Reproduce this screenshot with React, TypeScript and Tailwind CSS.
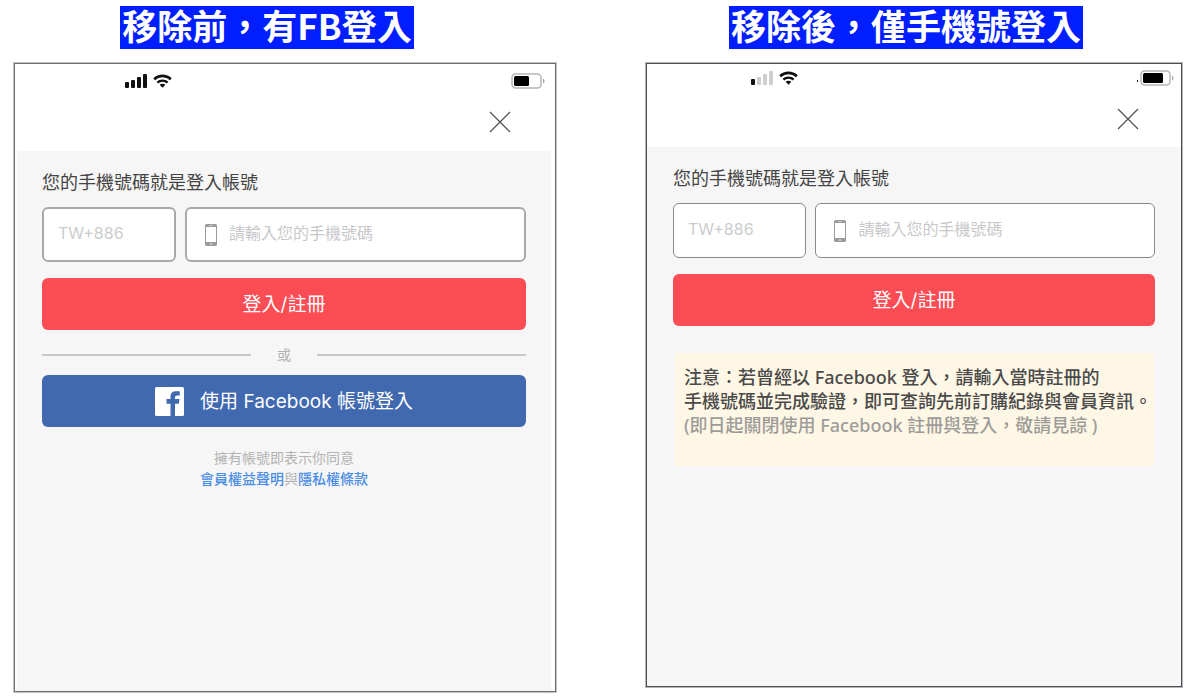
import React from "react";
import clsx from "clsx";

// full-width punctuation
const COMMA = "\uff0c";
const COLON = "\uff1a";

const Signal = ({ bars }: { bars: number }) => (
  <svg width="22" height="14" viewBox="0 0 22 14" aria-hidden="true">
    {[
      { x: 0, h: 6 },
      { x: 6, h: 8 },
      { x: 12, h: 11 },
      { x: 18, h: 14 },
    ].map((bar, i) => (
      <rect
        key={bar.x}
        x={bar.x}
        y={14 - bar.h}
        width="4"
        height={bar.h}
        rx="1"
        fill={i < bars ? "#111" : "#cfcfcf"}
      />
    ))}
  </svg>
);

const Wifi = () => (
  <svg width="19" height="14" viewBox="0 0 20 14" fill="none" aria-hidden="true">
    <path d="M1.2 5.2C6.2 .4 13.8.4 18.8 5.2" stroke="#111" strokeWidth="2.7" />
    <path d="M4.6 8.8c2.9-2.9 7.9-2.9 10.8 0" stroke="#111" strokeWidth="2.5" />
    <path d="M10 14l-3-3c1.6-1.5 4.4-1.5 6 0z" fill="#111" />
  </svg>
);

const Battery = ({ level }: { level: number }) => (
  <svg width="34" height="16" viewBox="0 0 34 16" fill="none" aria-hidden="true">
    <rect x="1" y="1" width="29" height="14" rx="3.5" stroke="#b5b5b5" strokeWidth="1.5" />
    <rect x="3" y="3" width={level} height="10" rx="1.5" fill="#000" />
    <path d="M32 5.5c2 .8 2 4.2 0 5z" fill="#a8a8a8" />
  </svg>
);

const PhoneIcon = () => (
  <svg width="12" height="22" viewBox="0 0 12 22" className="shrink-0" aria-hidden="true">
    <rect width="12" height="22" rx="1.5" fill="#9b9b9b" />
    <rect x="1" y="3" width="10" height="15" fill="#fff" />
    <rect x="4" y="1.2" width="4" height=".7" fill="#ddd" />
    <circle cx="6" cy="20" r=".9" fill="#ddd" />
  </svg>
);

const FacebookIcon = () => (
  <svg width="29" height="29" viewBox="0 0 29 29" className="shrink-0" aria-hidden="true">
    <rect width="29" height="29" rx="1.5" fill="#fff" />
    <path
      d="M15.5 29V16.8h-4V12h4V9.5C15.5 6 17.8 4.2 21 4.2h3.8v4.4h-2.6c-1.6 0-2.2.8-2.2 2.2V12h4.5l-.6 4.8H20V29z"
      fill="#4169b0"
    />
  </svg>
);

const CloseButton = () => (
  <button type="button" aria-label="關閉">
    <svg width="22" height="22" viewBox="0 0 22 22" className="block">
      <path d="M1 1l20 20M21 1L1 21" stroke="#555" strokeWidth="1.3" />
    </svg>
  </button>
);

const Title = ({ children }: { children: React.ReactNode }) => (
  <h2 className="h-[43px] bg-[#001eff] px-[2px] text-[35px] leading-[38px] font-bold whitespace-nowrap text-white [font-family:'Noto_Sans_CJK_TC',sans-serif]">
    {children}
  </h2>
);

const LoginForm = ({ id, fieldClass }: { id: string; fieldClass: string }) => (
  <>
    <label htmlFor={`${id}-phone`} className="block text-[18px] leading-[30px] text-[#444]">
      您的手機號碼就是登入帳號
    </label>
    <div className="mt-[9px] grid h-[55px] grid-cols-[134fr_341fr] gap-[9px]">
      <input
        type="text"
        aria-label="國碼"
        placeholder="TW+886"
        className={clsx(
          "min-w-0 rounded-md bg-white pb-1 pl-[14px] text-base placeholder:text-[#ccc]",
          fieldClass
        )}
      />
      <div className={clsx("flex min-w-0 items-center gap-3 rounded-md bg-white pl-[18px]", fieldClass)}>
        <PhoneIcon />
        <input
          id={`${id}-phone`}
          type="tel"
          placeholder="請輸入您的手機號碼"
          className="h-full w-full min-w-0 pb-1 text-base outline-none placeholder:text-[#c8c8cb]"
        />
      </div>
    </div>
    <button
      type="submit"
      className="mt-4 h-[52px] w-full rounded-md bg-[#fc4c54] pt-[2px] text-[19px] text-white"
    >
      登入/註冊
    </button>
  </>
);

const BeforePanel = () => (
  <section className="flex min-w-0 flex-[542] flex-col pb-[5px]">
    <div className="flex justify-center pr-9">
      <Title>移除前{COMMA}有FB登入</Title>
    </div>
    <div className="mt-[14px] flex flex-1 flex-col border border-[#6e6e6e] bg-white ring-1 ring-[#c4c4c4]">
      <div className="flex h-[34px] items-center gap-[6px] pr-[10px] pl-[110px]">
        <Signal bars={4} />
        <Wifi />
        <div className="ml-auto">
          <Battery level={15} />
        </div>
      </div>
      <div className="mb-[5px] flex h-12 items-center justify-end pr-[44px]">
        <CloseButton />
      </div>
      <form className="mr-1 ml-[2px] flex-1 bg-[#f6f6f6] px-[25px] pt-[17px]">
        <LoginForm id="before" fieldClass="border-2 border-[#a9a9a9]" />
        <div className="mt-[15px] flex h-5 items-center text-sm text-[#b0b0b0]">
          <span className="h-[2px] flex-1 bg-[#c8c8c8]" />
          <span className="px-[26px]">或</span>
          <span className="h-[2px] flex-1 bg-[#c8c8c8]" />
        </div>
        <button
          type="button"
          className="mt-[10px] flex h-[52px] w-full items-center justify-center gap-4 rounded-md bg-[#4169b0] text-[19px] text-white"
        >
          <FacebookIcon />
          <span className="pt-[2px]">使用 Facebook 帳號登入</span>
        </button>
        <p className="mt-5 text-center text-sm leading-[21px] text-[#b3b3b3]">
          擁有帳號即表示你同意
          <br />
          <a href="#terms" className="font-medium text-[#4a8de6]">
            會員權益聲明
          </a>
          與
          <a href="#privacy" className="font-medium text-[#4a8de6]">
            隱私權條款
          </a>
        </p>
      </form>
    </div>
  </section>
);

const AfterPanel = () => (
  <section className="flex min-w-0 flex-[536] flex-col pb-[10px]">
    <div className="flex justify-center pr-4">
      <Title>移除後{COMMA}僅手機號登入</Title>
    </div>
    <div className="mt-[14px] flex flex-1 flex-col border border-[#4b5058] bg-white ring-1 ring-[#b4b4b4]">
      <div className="flex h-7 items-center gap-[6px] pr-[7px] pl-[104px]">
        <Signal bars={1} />
        <Wifi />
        <div className="ml-auto flex items-end gap-[2px]">
          <span className="mb-1 h-[2px] w-px bg-black" />
          <Battery level={20} />
        </div>
      </div>
      <div className="mb-[1px] flex h-[54px] items-center justify-end pr-[42px]">
        <CloseButton />
      </div>
      <form className="flex-1 bg-[#f6f6f6] px-[26px] pt-[17px]">
        <LoginForm id="after" fieldClass="border border-[#888]" />
        <div className="mt-[27px] mr-[1px] ml-[2px] h-[113px] bg-[#fff7e5] pt-3 pl-[9px] text-[18px] leading-6 font-medium whitespace-nowrap text-[#4a4a4a] [font-family:'Noto_Sans','Noto_Sans_CJK_TC',sans-serif]">
          <p>
            注意{COLON}若曾經以 Facebook 登入{COMMA}請輸入當時註冊的
          </p>
          <p>手機號碼並完成驗證{COMMA}即可查詢先前訂購紀錄與會員資訊。</p>
          <p className="text-[#9d9c99]">
            (即日起關閉使用 Facebook 註冊與登入{COMMA}敬請見諒 )
          </p>
        </div>
      </form>
    </div>
  </section>
);

const App = () => {
  return (
    <main
      lang="zh-Hant"
      className="flex min-h-screen gap-[90px] bg-white pt-[6px] pr-2 pl-[14px] [font-family:Inter,'Noto_Sans_CJK_TC',sans-serif]"
    >
      <BeforePanel />
      <AfterPanel />
    </main>
  );
};

export default App;
